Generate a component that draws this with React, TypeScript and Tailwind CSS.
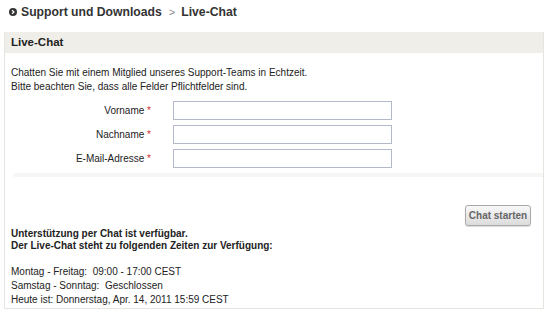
import React from 'react';

const font = { fontFamily: '"Liberation Sans", Arial, sans-serif' };

function Field({ label }: { label: string }) {
  return (
    <div className="flex items-center h-[24px]">
      <label className="w-[168px] text-right pr-[22px] text-[10px] text-[#222]">
        {label} <span className="text-[#d0332b]">*</span>
      </label>
      <input type="text" className="w-[219px] h-[19px] border border-[#b4b9c9] bg-white outline-none" />
    </div>
  );
}

export default function App() {
  return (
    <div className="w-[550px] h-[312px] bg-white text-[#222] overflow-hidden" style={font}>
      <div className="flex items-center h-[24px] pl-[9px]">
        <span className="w-[8px] h-[8px] rounded-full bg-[#333] flex items-center justify-center mr-[4px]">
          <svg width="6" height="6" viewBox="0 0 6 6">
            <path d="M2 1.2 L4 3 L2 4.8" stroke="white" strokeWidth="1.2" fill="none" />
          </svg>
        </span>
        <span className="text-[12.2px] font-bold text-[#333]">Support und Downloads</span>
        <span className="text-[11px] text-[#888] ml-[7px] mr-[6px]">&gt;</span>
        <span className="text-[12.2px] font-bold text-[#333]">Live-Chat</span>
      </div>
      <div className="mt-[8px] ml-[4px] w-[540px] h-[277px] border-x border-b border-[#e6e5e0] flex flex-col">
        <div className="h-[21px] bg-[#efeee9] flex items-center pl-[6px] text-[11.5px] font-bold text-[#222]">
          Live-Chat
        </div>
        <div className="pl-[6px] pt-[13px] text-[10px] leading-[14px]">
          <p>Chatten Sie mit einem Mitglied unseres Support-Teams in Echtzeit.</p>
          <p>Bitte beachten Sie, dass alle Felder Pflichtfelder sind.</p>
        </div>
        <div className="mt-[4px] flex flex-col">
          <Field label="Vorname" />
          <Field label="Nachname" />
          <Field label="E-Mail-Adresse" />
        </div>
        <div className="mt-[3px] ml-[9px] h-[4px] bg-[#f6f6f4]" />
        <div className="flex justify-end pr-[12px] mt-[28px]">
          <button className="w-[66px] h-[21px] text-[10px] font-bold text-[#666] border border-[#a9a9a9] rounded-[3px] bg-gradient-to-b from-[#f8f8f8] to-[#dcdcdc] shadow-[0_1px_1px_rgba(0,0,0,0.15)]">
            Chat starten
          </button>
        </div>
        <div className="pl-[6px] mt-[2px] text-[10px] leading-[12px]">
          <p className="font-bold">Unterstützung per Chat ist verfügbar.</p>
          <p className="font-bold">Der Live-Chat steht zu folgenden Zeiten zur Verfügung:</p>
          <p className="mt-[13px] leading-[14px] whitespace-pre">Montag - Freitag:  09:00 - 17:00 CEST</p>
          <p className="leading-[14px] whitespace-pre">Samstag - Sonntag:  Geschlossen</p>
          <p className="leading-[14px]">Heute ist: Donnerstag, Apr. 14, 2011 15:59 CEST</p>
        </div>
      </div>
    </div>
  );
}
